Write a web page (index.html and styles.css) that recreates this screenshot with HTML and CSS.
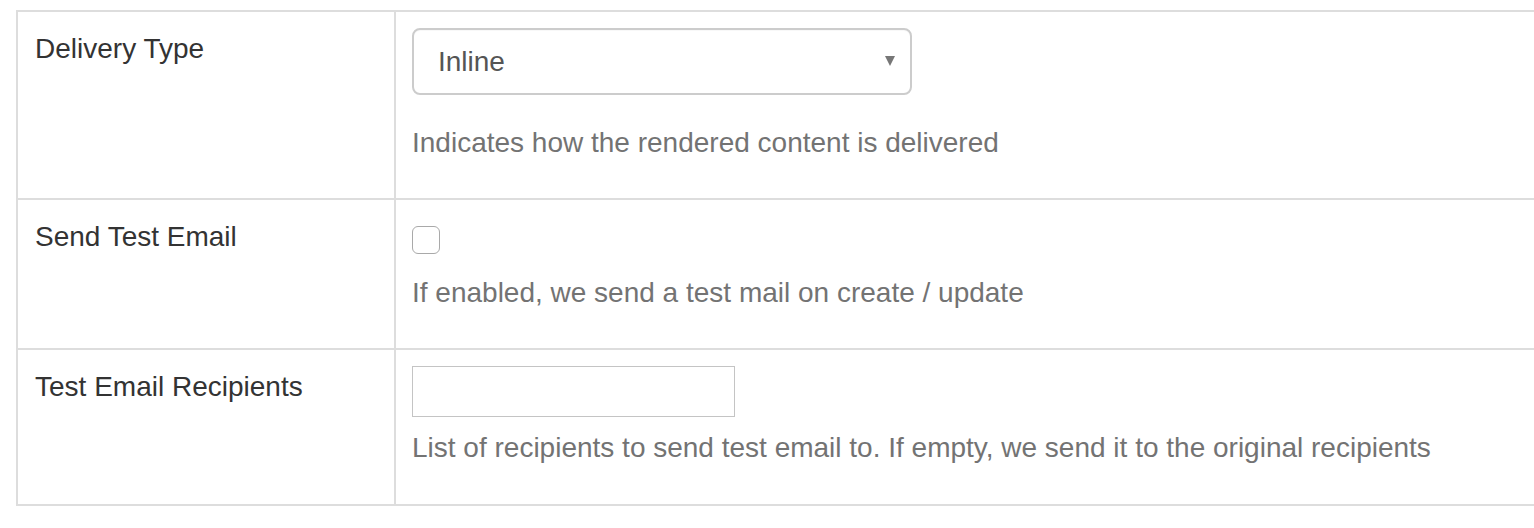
FILE: index.html
```html
<!DOCTYPE html>
<html>
<head>
<meta charset="utf-8">
<link rel="stylesheet" href="styles.css">
</head>
<body>
<div class="wrap">
  <div class="table">
    <div class="row row-1">
      <div class="label">Delivery Type</div>
      <div class="field">
        <div class="select"><span>Inline</span><span class="caret"></span></div>
        <div class="help help-1">Indicates how the rendered content is delivered</div>
      </div>
    </div>
    <div class="row row-2">
      <div class="label">Send Test Email</div>
      <div class="field">
        <div class="checkbox"></div>
        <div class="help help-2">If enabled, we send a test mail on create / update</div>
      </div>
    </div>
    <div class="row row-3">
      <div class="label">Test Email Recipients</div>
      <div class="field">
        <div class="input"></div>
        <div class="help help-3">List of recipients to send test email to. If empty, we send it to the original recipients</div>
      </div>
    </div>
  </div>
</div>
</body>
</html>
```
FILE: styles.css
```css
html, body {
  margin: 0;
  padding: 0;
  background: #fff;
  overflow: hidden;
}
body {
  font-family: "Liberation Sans", Arial, sans-serif;
  font-size: 28px;
  line-height: 38px;
  color: #333;
}
.wrap {
  padding: 10px 0 0 16px;
}
.table {
  width: 1700px;
  border-left: 2px solid #ddd;
  border-top: 2px solid #ddd;
}
.row {
  display: grid;
  grid-template-columns: 378px 1fr;
  border-bottom: 2px solid #ddd;
}
.label {
  padding: 18px 0 0 17px;
  border-right: 2px solid #ddd;
}
.field {
  padding-left: 16px;
}
.row-1 { height: 186px; }
.row-2 { height: 148px; }
.row-3 { height: 154px; }
.row-1 .field { padding-top: 16px; }
.row-2 .field { padding-top: 26px; }
.row-3 .field { padding-top: 16px; }

.select {
  box-sizing: border-box;
  width: 500px;
  height: 67px;
  border: 2px solid #ccc;
  border-radius: 8px;
  display: flex;
  align-items: center;
  justify-content: space-between;
  padding: 0 15px 0 24px;
  color: #555;
  box-shadow: inset 0 1px 1px rgba(0,0,0,0.03);
}
.caret {
  width: 0;
  height: 0;
  border-left: 5px solid transparent;
  border-right: 5px solid transparent;
  border-top: 10px solid #777;
  margin-top: -2px;
}
.checkbox {
  box-sizing: border-box;
  width: 28px;
  height: 28px;
  border: 1.5px solid #a9a9a9;
  border-radius: 6px;
  background: #fff;
}
.input {
  box-sizing: border-box;
  width: 323px;
  height: 51px;
  border: 1.5px solid #c4c4c4;
}
.help {
  color: #737373;
  white-space: nowrap;
}
.help-1 { margin-top: 29px; }
.help-2 { margin-top: 20px; }
.help-3 { margin-top: 12px; }
```
